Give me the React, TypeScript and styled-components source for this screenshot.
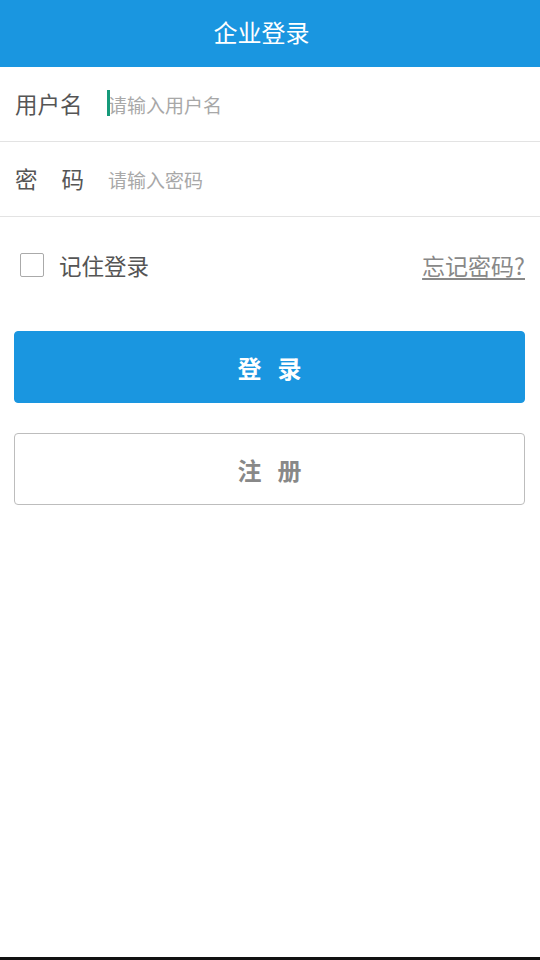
import React from "react";
import styled, { createGlobalStyle } from "styled-components";

const GlobalStyle = createGlobalStyle`
  html, body {
    margin: 0;
    padding: 0;
    background: #fff;
  }
  body {
    font-family: "Noto Sans CJK SC", "Noto Sans", sans-serif;
  }
`;

const App = () => {
  return (
    <Page>
      <GlobalStyle />
      <Header>企业登录</Header>

      <FieldRow>
        <Label>用户名</Label>
        <InputWrap>
          <Caret />
          <Input placeholder="请输入用户名" />
        </InputWrap>
      </FieldRow>
      <FieldRow>
        <Label>
          <span>密</span>
          <span>码</span>
        </Label>
        <InputWrap>
          <Input type="password" placeholder="请输入密码" />
        </InputWrap>
      </FieldRow>

      <OptionsRow>
        <Remember>
          <CheckBox />
          记住登录
        </Remember>
        <Forgot href="#">忘记密码?</Forgot>
      </OptionsRow>

      <Actions>
        <Button primary>登录</Button>
        <Button>注册</Button>
      </Actions>

      <Spacer />
      <BottomBar />
    </Page>
  );
};

export default App;

const Page = styled.div`
  min-height: 100vh;
  display: flex;
  flex-direction: column;
  background: #fff;
`;

const Header = styled.div`
  height: 67px;
  box-sizing: border-box;
  background-color: #1a96e0;
  color: #fff;
  font-size: 24px;
  display: flex;
  justify-content: center;
  align-items: center;
  padding: 0 17px 4px 0;
`;

const FieldRow = styled.div`
  height: 74px;
  display: flex;
  align-items: center;
  padding: 0 15px;
  border-bottom: 1px solid #e3e3e3;
`;

const Label = styled.div`
  width: 69px;
  display: flex;
  justify-content: space-between;
  font-size: 22.5px;
  color: #555;
  margin-right: 24px;
  margin-top: -2px;
`;

const InputWrap = styled.div`
  flex: 1;
  position: relative;
  display: flex;
  align-items: center;
`;

const Caret = styled.div`
  position: absolute;
  left: -1px;
  top: 50%;
  width: 3px;
  height: 26px;
  margin-top: -14px;
  background: #169a7a;
`;

const Input = styled.input`
  flex: 1;
  border: none;
  outline: none;
  padding: 0;
  font-family: inherit;
  font-size: 19px;
  color: #333;
  background: transparent;
  &::placeholder {
    color: #a8a8a8;
  }
`;

const OptionsRow = styled.div`
  display: flex;
  justify-content: space-between;
  align-items: center;
  padding: 32px 15px 0 20px;
  height: 32px;
  margin-bottom: 2px;
`;

const Remember = styled.label`
  display: flex;
  align-items: center;
  gap: 15px;
  font-size: 22.5px;
  color: #555;
`;

const CheckBox = styled.span`
  display: inline-block;
  width: 24px;
  height: 24px;
  box-sizing: border-box;
  border: 1.5px solid #aaa;
  border-radius: 2px;
`;

const Forgot = styled.a`
  font-size: 23px;
  color: #888;
  text-decoration: underline;
  text-underline-offset: 3px;
`;

const Actions = styled.div`
  display: flex;
  flex-direction: column;
  gap: 30px;
  padding: 0 15px 0 14px;
  margin-top: 48px;
`;

const Button = styled.button<{ primary?: boolean }>`
  height: 72px;
  box-sizing: border-box;
  border-radius: 4px;
  border: 1px solid ${(p) => (p.primary ? "#1a96e0" : "#bdbdbd")};
  background: ${(p) => (p.primary ? "#1a96e0" : "#fff")};
  color: ${(p) => (p.primary ? "#fff" : "#888")};
  font-family: inherit;
  font-size: 24px;
  font-weight: 700;
  letter-spacing: 16px;
  text-indent: 16px;
`;

const Spacer = styled.div`
  flex: 1;
`;

const BottomBar = styled.div`
  height: 3px;
  background: #111;
`;
